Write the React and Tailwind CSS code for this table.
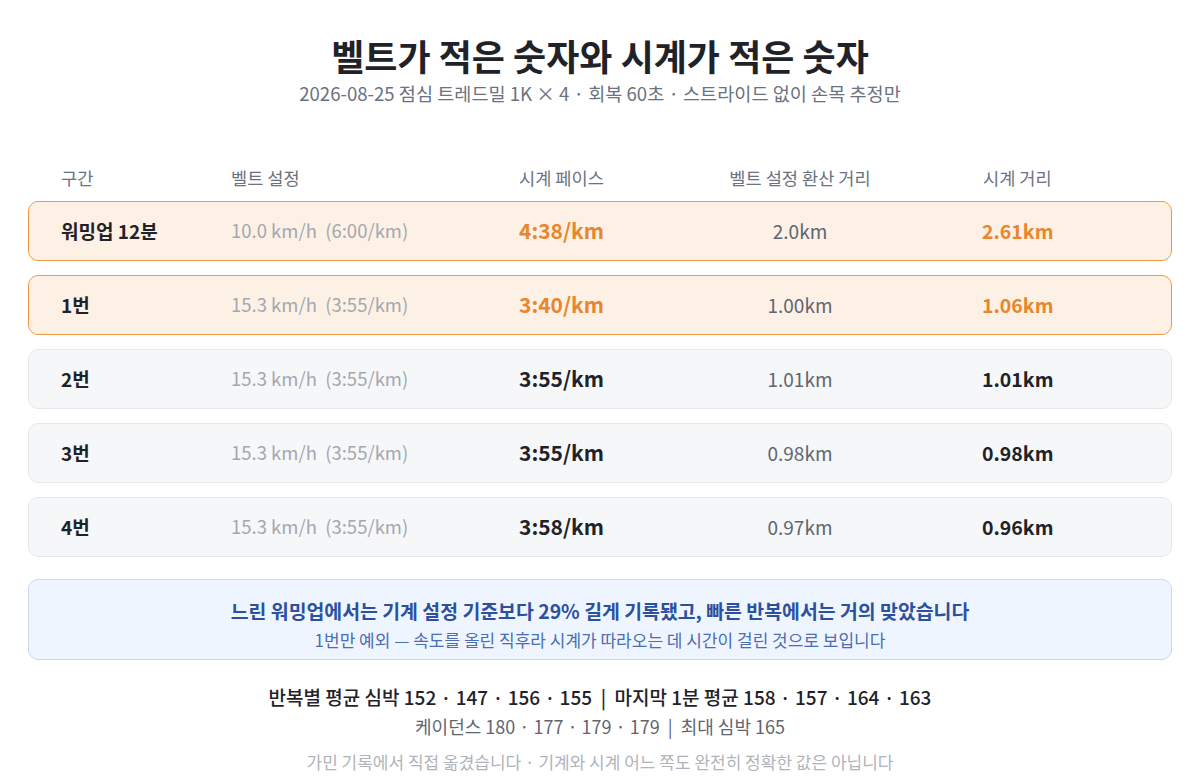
const font = { fontFamily: '"Noto Sans CJK KR", "Noto Sans", sans-serif' }

const rows = [
  { name: '워밍업 12분', belt: '10.0 km/h  (6:00/km)', pace: '4:38/km', beltDist: '2.0km', watchDist: '2.61km', hot: true },
  { name: '1번', belt: '15.3 km/h  (3:55/km)', pace: '3:40/km', beltDist: '1.00km', watchDist: '1.06km', hot: true },
  { name: '2번', belt: '15.3 km/h  (3:55/km)', pace: '3:55/km', beltDist: '1.01km', watchDist: '1.01km' },
  { name: '3번', belt: '15.3 km/h  (3:55/km)', pace: '3:55/km', beltDist: '0.98km', watchDist: '0.98km' },
  { name: '4번', belt: '15.3 km/h  (3:55/km)', pace: '3:58/km', beltDist: '0.97km', watchDist: '0.96km' },
]

const cols = 'grid grid-cols-[170px_288px_200px_162px_1fr] items-center'

function Row({ name, belt, pace, beltDist, watchDist, hot }) {
  return (
    <div
      className={`${cols} h-[60px] rounded-[10px] border pl-[32px] ${
        hot ? 'bg-[#fdf1e6] border-[#f09a48]' : 'bg-[#f6f7f9] border-[#e6e8eb]'
      }`}
    >
      <div className="text-[19px] font-bold text-[#1f2329]">{name}</div>
      <div className="text-[18.5px] text-[#a3a8b0] whitespace-pre">{belt}</div>
      <div className={`text-[21px] font-bold ${hot ? 'text-[#e8862e]' : 'text-[#1f2329]'}`}>{pace}</div>
      <div className="text-[19px] text-[#5f6670] text-center">{beltDist}</div>
      <div className={`pl-[101px] text-[19.5px] font-bold ${hot ? 'text-[#e8862e]' : 'text-[#1f2329]'}`}>
        {watchDist}
      </div>
    </div>
  )
}

export default function App() {
  return (
    <div className="w-[1200px] h-[776px] bg-white overflow-hidden" style={font}>
      <div className="flex flex-col items-center pt-[30px]">
        <h1 className="text-[36px] font-bold text-[#1f2329] leading-[50px]">벨트가 적은 숫자와 시계가 적은 숫자</h1>
        <p className="text-[18.6px] text-[#6b7280] leading-[26px]">
          2026-08-25 점심 트레드밀 1K × 4 · 회복 60초 · 스트라이드 없이 손목 추정만
        </p>
      </div>

      <div className="px-[28px] mt-[57px]">
        {/* 헤더 */}
        <div className={`${cols} pl-[33px] h-[30px] text-[17.6px] text-[#6b7280]`}>
          <div>구간</div>
          <div>벨트 설정</div>
          <div>시계 페이스</div>
          <div className="text-center whitespace-nowrap">벨트 설정 환산 거리</div>
          <div className="pl-[102px]">시계 거리</div>
        </div>

        <div className="flex flex-col gap-[14px] mt-[8px]">
          {rows.map((r) => (
            <Row key={r.name} {...r} />
          ))}
        </div>

        {/* 요약 */}
        <div className="mt-[22px] h-[81px] rounded-[10px] border border-[#c9d8ef] bg-[#eff5fe] flex flex-col items-center pt-[17px]">
          <div className="text-[19.4px] font-bold text-[#2c50a0] leading-[28px]">
            느린 워밍업에서는 기계 설정 기준보다 29% 길게 기록됐고, 빠른 반복에서는 거의 맞았습니다
          </div>
          <div className="text-[17px] text-[#4a6db3] leading-[24px] mt-[3px]">
            1번만 예외 — 속도를 올린 직후라 시계가 따라오는 데 시간이 걸린 것으로 보입니다
          </div>
        </div>
      </div>

      <div className="flex flex-col items-center mt-[22px]">
        <div className="text-[19px] font-medium text-[#1f2329] leading-[30px] whitespace-pre">
          반복별 평균 심박 152 · 147 · 156 · 155  |  마지막 1분 평균 158 · 157 · 164 · 163
        </div>
        <div className="text-[18px] text-[#5f6670] leading-[28px] whitespace-pre">
          케이던스 180 · 177 · 179 · 179  |  최대 심박 165
        </div>
        <div className="text-[17px] text-[#b0b4ba] leading-[28px] mt-[8px]">
          가민 기록에서 직접 옮겼습니다 · 기계와 시계 어느 쪽도 완전히 정확한 값은 아닙니다
        </div>
      </div>
    </div>
  )
}
